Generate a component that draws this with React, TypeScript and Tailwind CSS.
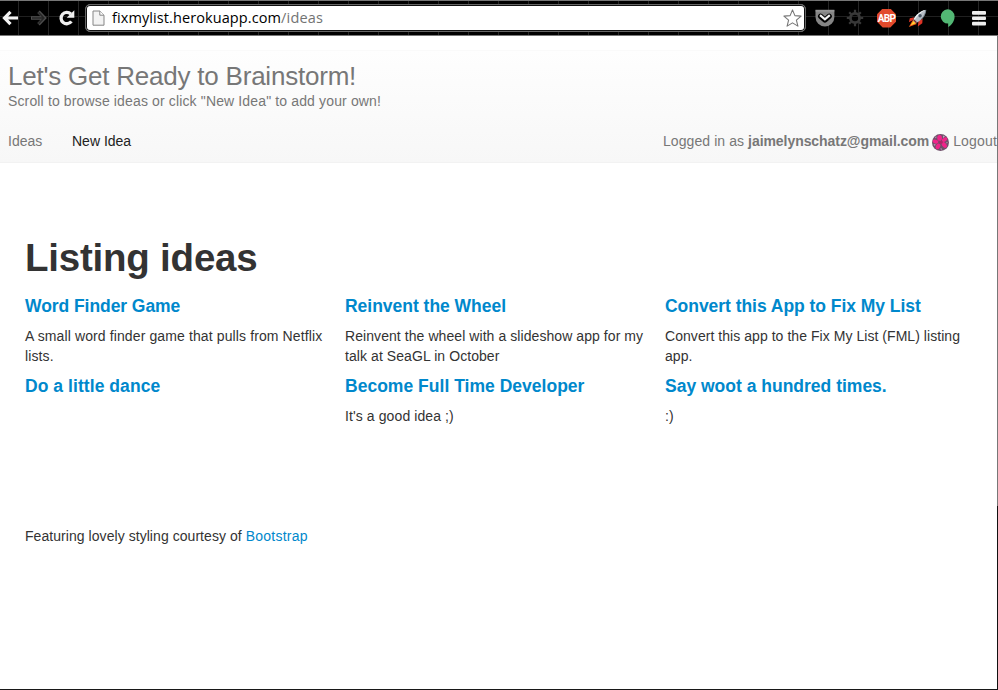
import React from "react";

type Idea = { title: string; body: string[]; titleClass: string; bodyClass: string };

const ideas: Idea[] = [
  { title: "Word Finder Game", body: ["A small word finder game that pulls from Netflix", "lists."], titleClass: "tracking-[-0.06px]", bodyClass: "tracking-[0.115px]" },
  { title: "Reinvent the Wheel", body: ["Reinvent the wheel with a slideshow app for my", "talk at SeaGL in October"], titleClass: "tracking-[-0.02px]", bodyClass: "tracking-[0.07px]" },
  { title: "Convert this App to Fix My List", body: ["Convert this app to the Fix My List (FML) listing", "app."], titleClass: "tracking-[-0.04px]", bodyClass: "tracking-[0.05px]" },
  { title: "Do a little dance", body: [], titleClass: "tracking-[0.06px]", bodyClass: "" },
  { title: "Become Full Time Developer", body: ["It's a good idea ;)"], titleClass: "tracking-[0.02px]", bodyClass: "tracking-[0.1px]" },
  { title: "Say woot a hundred times.", body: [":)"], titleClass: "tracking-[0px]", bodyClass: "tracking-[0px]" },
];

function BackIcon() {
  return (
    <svg className="ml-[2px] shrink-0" width="17" height="16" viewBox="0 0 17 16" fill="none" stroke="#f4f4f4" strokeWidth="3.2">
      <path d="M8.5 1.8 2.5 8l6 6.2M3 8h13" />
    </svg>
  );
}

function ForwardIcon() {
  return (
    <svg className="ml-[11px] shrink-0" width="17" height="16" viewBox="0 0 17 16" fill="none">
      <path d="M8.5 1.8 14.5 8l-6 6.2M14 8H1" stroke="#4d4d4d" strokeWidth="3.4" />
      <path d="M8.5 2.4 13.8 8l-5.3 5.6M14 8H2" stroke="#262626" strokeWidth="1.6" />
    </svg>
  );
}

function ReloadIcon() {
  return (
    <svg className="ml-[11px] shrink-0" width="18" height="18" viewBox="0 0 18 18">
      <path d="M13.4 12.4A5.7 5.7 0 1 1 12.8 5" fill="none" stroke="#f0f0f0" strokeWidth="3.3" />
      <path d="M16.3 1.2v7.6H8.7z" fill="#f0f0f0" />
    </svg>
  );
}

function PageIcon() {
  return (
    <svg className="ml-[6px] shrink-0" width="13" height="16" viewBox="0 0 13 16" fill="#f3f3f3" stroke="#858585">
      <path d="M1 1h6.8l4.2 4.2v10H1z" />
      <path d="M7.8 1v4.2h4.2" fill="#fff" />
    </svg>
  );
}

function StarIcon() {
  return (
    <svg className="mr-[3px] shrink-0" width="19" height="18" viewBox="0 0 19 18" fill="#fff" stroke="#777" strokeWidth="1.1" strokeLinejoin="round">
      <path d="m9.5.9 2.4 5.7 6.2.5-4.7 4 1.5 6-5.4-3.2-5.4 3.2 1.5-6-4.7-4 6.2-.5z" />
    </svg>
  );
}

function PocketIcon() {
  return (
    <svg width="20" height="18" viewBox="0 0 20 18">
      <path d="M.5.7h18.9v7.4a9.45 9.3 0 0 1-18.9 0z" fill="#858585" />
      <path d="M.5 1.9h18.9" stroke="#a2a2a2" />
      <path d="m5.6 7.2 4.3 3.9 4.3-3.9" fill="none" stroke="#000" strokeWidth="5.2" strokeLinecap="round" strokeLinejoin="round" />
      <path d="m5 6.1 4.9 4.3 4.9-4.3" fill="none" stroke="#f5f5f5" strokeWidth="2.2" />
    </svg>
  );
}

function GearIcon() {
  return (
    <svg width="18" height="18" viewBox="0 0 18 18" fill="none" stroke="#383838">
      <circle cx="9" cy="9" r="4.6" strokeWidth="2.8" />
      <path d="M9 .8v3M9 14.2v3M.8 9h3M14.2 9h3M3.2 3.2l2 2M12.8 12.8l2 2M3.2 14.8l2-2M12.8 5.2l2-2" strokeWidth="2.2" />
    </svg>
  );
}

function AdBlockIcon() {
  return (
    <span className="flex h-[19px] w-[19px] items-center justify-center bg-[#e24a2c] [clip-path:polygon(30%_0,70%_0,100%_30%,100%_70%,70%_100%,30%_100%,0_70%,0_30%)]">
      <span className="font-['Roboto','Open_Sans',sans-serif] text-[10px] leading-[19px] font-bold tracking-[-0.6px] text-white">ABP</span>
    </span>
  );
}

function RocketIcon() {
  return (
    <svg width="19" height="19" viewBox="0 0 19 19">
      <path d="M6.5 8.2 1.8 9.3.9 13.2l4-2.3zM10.5 12.2 9.8 17.6l4.5-3.3.3-4.5z" fill="#df3325" />
      <path d="M4.8 11.1.8 17.9l8-3z" fill="#f45a19" />
      <path d="m5.4 12-2.9 4.4 5.2-2.1z" fill="#ffd52e" />
      <path d="M17.8.9C12.8 1.5 8.2 5.3 4.9 11.2l3 3C13.6 11.3 17.5 6.4 17.8.9z" fill="#b6bec6" />
      <path d="M17.8.9C12.9 2.8 8.9 7 6 12.1l-1.1-.9C8.2 5.3 12.8 1.5 17.8.9z" fill="#edf1f3" />
      <path d="M17.8.9c-.2 3.4-1.8 6.7-4.4 9.2" fill="none" stroke="#7d8993" />
      <circle cx="12.1" cy="6.7" r="1.7" fill="#4b5967" />
      <path d="m5.3 10.5 3.3 3.2" stroke="#7e3029" strokeWidth="1.2" />
    </svg>
  );
}

function HangoutsIcon() {
  return (
    <svg width="15" height="19" viewBox="0 0 15 19" fill="#52b774">
      <path d="M7.5.3a7.1 7.1 0 0 1 7.1 7.1c0 4.8-2.8 8.3-6.4 10.7v-3.6A7.1 7.1 0 1 1 7.5.3z" />
    </svg>
  );
}

function MenuIcon() {
  return (
    <svg width="14" height="15" viewBox="0 0 14 15" fill="#eee">
      <rect width="14" height="3.7" rx="1" />
      <rect y="5.4" width="14" height="3.7" rx="1" />
      <rect y="10.8" width="14" height="3.7" rx="1" />
    </svg>
  );
}

function Avatar() {
  return (
    <svg className="mr-[4px] ml-[3px] mt-[2px] shrink-0" width="17" height="17" viewBox="0 0 17 17">
      <circle cx="8.5" cy="8.5" r="8.5" fill="#70506a" />
      <g fill="#f0248a">
        <ellipse cx="7.6" cy="3.9" rx="2.4" ry="2.9" />
        <ellipse cx="3.5" cy="7.6" rx="2.9" ry="1.9" transform="rotate(15 3.5 7.6)" />
        <ellipse cx="12.6" cy="5.6" rx="3" ry="1.9" transform="rotate(-30 12.6 5.6)" />
        <ellipse cx="6" cy="12.4" rx="2.1" ry="3" transform="rotate(25 6 12.4)" />
        <ellipse cx="12.3" cy="11" rx="2.1" ry="3.2" transform="rotate(-38 12.3 11)" />
      </g>
      <path d="m11 1.5 2 1-2 1.5zM1.5 10.5l2-.5-.5 2zM8.5 14l1.4.8-.8 1.6zM14.5 8l1.4.5-1.4 1zM3 3l1.6-.6L4 4.5z" fill="#c2a6c0" />
      <path d="m7 7.4 3-.6.8 2.4-2.6.8z" fill="#b61f68" />
    </svg>
  );
}

function Toolbar() {
  return (
    <div className="flex h-[36px] shrink-0 items-center border-t border-b border-t-[#777] border-b-[#777] bg-black bg-[linear-gradient(to_right,transparent_18px,#252525_18px,#252525_19px,transparent_19px),linear-gradient(#202020,#202020)] bg-[length:30px_100%,100%_1px] bg-[position:0_0,0_15px] [background-repeat:repeat-x,no-repeat]">
      <BackIcon />
      <ForwardIcon />
      <ReloadIcon />
      <div className="ml-[9px] flex h-[28px] w-[721px] shrink-0 items-center rounded-[5px] border border-[#666] bg-white shadow-[inset_0_0_0_1px_#111]">
        <PageIcon />
        <span className="ml-[7px] flex-1 whitespace-nowrap font-['Open_Sans','Noto_Sans',sans-serif] text-[14.5px] leading-[20px] tracking-[0.09px] text-black">
          <span>fixmylist.herokuapp.com</span><span className="tracking-[0.2px] text-[#737373]">/ideas</span>
        </span>
        <StarIcon />
      </div>
      <div className="ml-[9px] flex shrink-0 items-center">
        <PocketIcon />
        <span className="ml-[11px]"><GearIcon /></span>
        <span className="ml-[13px]"><AdBlockIcon /></span>
        <span className="ml-[12px]"><RocketIcon /></span>
        <span className="ml-[13px]"><HangoutsIcon /></span>
        <span className="ml-[17px]"><MenuIcon /></span>
      </div>
    </div>
  );
}

function Header() {
  return (
    <header className="mt-[14px] flex h-[113px] flex-col border-y border-t-[#fafafa] border-b-[#f2f2f2] bg-gradient-to-b from-[#fefefe] to-[#f7f7f7] text-[14px] text-[#777]">
      <div className="mt-[10px] ml-[8px] h-[30px] whitespace-nowrap text-[26px] leading-[30px] tracking-[-0.22px]">Let's Get Ready to Brainstorm!</div>
      <p className="ml-[8px] whitespace-nowrap leading-[20px] tracking-[0.14px]">Scroll to browse ideas or click "New Idea" to add your own!</p>
      <nav className="mt-[20px] flex h-[20px] items-center whitespace-nowrap leading-[20px]">
        <a className="ml-[8px] w-[64px]">Ideas</a>
        <a className="text-[#222]">New Idea</a>
        <div className="ml-auto flex items-center">
          <span className="tracking-[0.08px]">Logged in as <b className="tracking-[-0.06px]">jaimelynschatz@gmail.com</b></span>
          <Avatar />
          <a className="tracking-[0.17px]">Logout</a>
        </div>
      </nav>
    </header>
  );
}

export default function App() {
  return (
    <div className="flex h-[690px] w-[998px] flex-col overflow-hidden bg-white font-['Liberation_Sans',Arial,sans-serif] text-[14px] leading-[20px] text-[#333]">
      <Toolbar />
      <div className="flex flex-1 border-b border-[#181818]">
        <div className="flex w-[997px] flex-col">
          <Header />
          <main className="mt-[75px] ml-[25px] w-[960px]">
            <h1 className="text-[38.5px] leading-[40px] font-bold tracking-[-0.22px]">Listing ideas</h1>
            <div className="mt-[18px] grid grid-cols-3 gap-y-[10px]">
              {ideas.map((idea) => (
                <article key={idea.title} className="whitespace-nowrap">
                  <h4 className={"mb-[10px] text-[17.5px] leading-[20px] font-bold text-[#0088cc] " + idea.titleClass}>{idea.title}</h4>
                  {idea.body.map((line) => (
                    <p key={line} className={idea.bodyClass}>{line}</p>
                  ))}
                </article>
              ))}
            </div>
            <footer className="mt-[100px] tracking-[0.055px]">Featuring lovely styling courtesy of <a className="tracking-[0.24px] text-[#0088cc]">Bootstrap</a></footer>
          </main>
        </div>
        <div className="w-px bg-[linear-gradient(#777_470px,#111_470px)]" />
      </div>
    </div>
  );
}
